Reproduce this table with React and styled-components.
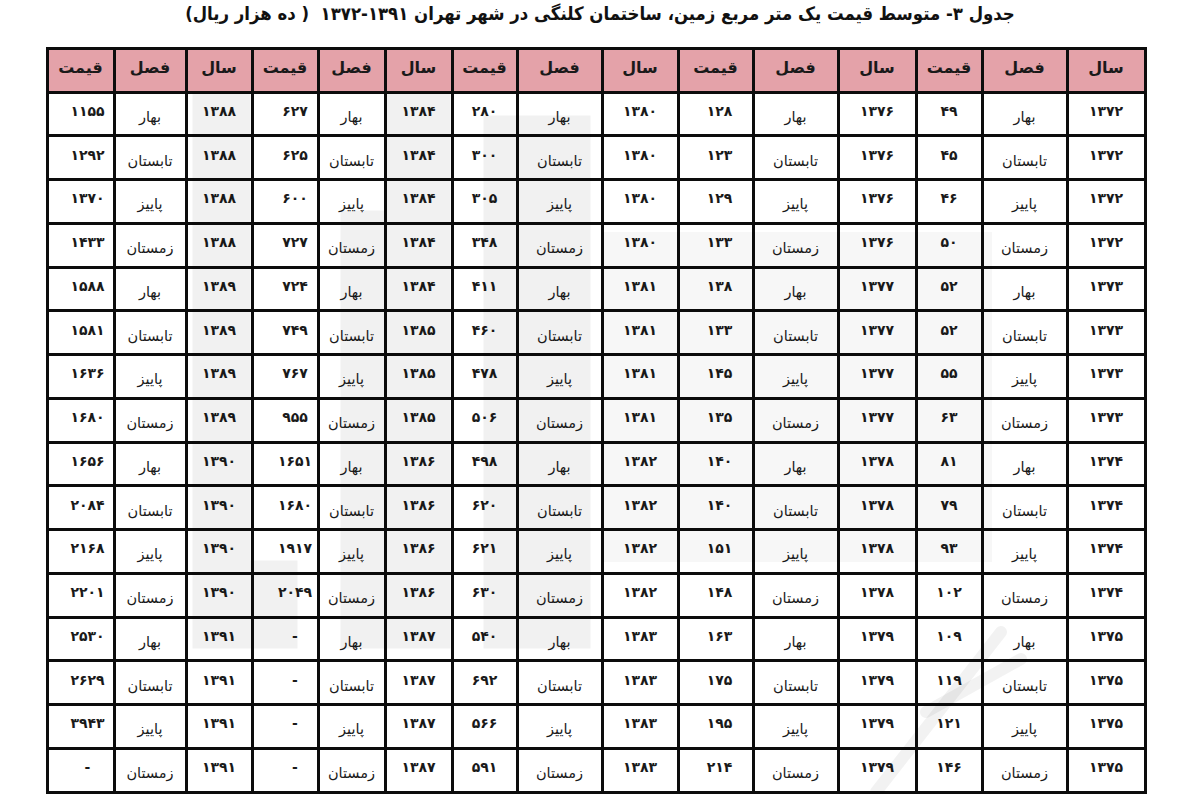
import React from "react";
import styled, { createGlobalStyle } from "styled-components";

const GlobalStyle = createGlobalStyle`
  html, body { margin: 0; padding: 0; background: #ffffff; }
  body { font-family: "DejaVu Sans", sans-serif; color: #151515; }
`;

const Page = styled.div`
  width: 1200px;
  height: 800px;
  overflow: hidden;
  display: flex;
  flex-direction: column;
  align-items: flex-start;
  background: #ffffff;
`;

const Title = styled.h1`
  margin: 0;
  width: 100%;
  height: 46.5px;
  direction: rtl;
  text-align: center;
  font-family: "DejaVu Sans Condensed", "DejaVu Sans", sans-serif;
  font-stretch: condensed;
  font-weight: bold;
  font-size: 18.4px;
  line-height: 27px;
  color: #111;
  white-space: nowrap;
`;

const TableWrap = styled.div`
  position: relative;
  margin-left: 45.5px;
`;

const Grid = styled.div`
  display: grid;
  direction: rtl;
  grid-template-columns: 75px 82px 63px 75px 82px 72px 73px 82px 62px 64px 64px 63px 63px 69px 64px;
  grid-template-rows: 41px repeat(16, 40.75px);
  gap: 3px;
  padding: 3px;
  background: #0c0c0c;
  width: max-content;
`;

const Cell = styled.div`
  background: ${(p) => (p.$head ? "#e4a2a9" : "#ffffff")};
  display: flex;
  align-items: center;
  justify-content: center;
  font-family: "DejaVu Sans", sans-serif;
  font-size: ${(p) => (p.$head ? "16px" : p.$kind === "season" ? "14.5px" : "14px")};
  font-weight: ${(p) => (p.$head || p.$kind !== "season" ? "bold" : "normal")};
  color: #1a1a1a;
  padding: ${(p) =>
    p.$head ? "0 0 6px 0" : p.$kind === "season" ? "6px 0 0 0" : "0 0 6px 0"};
  padding-left: ${(p) => (p.$nudge ? `${p.$nudge}px` : "0")};
  box-sizing: border-box;
  white-space: nowrap;
`;

const Watermark = styled.svg`
  position: absolute;
  left: 0;
  top: 0;
  width: 1101px;
  height: 747px;
  pointer-events: none;
`;

const toFa = (v) =>
  String(v).replace(/[0-9]/g, (d) => "۰۱۲۳۴۵۶۷۸۹"[Number(d)]);

const seasons = ["بهار", "تابستان", "پاییز", "زمستان"];
const heads = ["سال", "فصل", "قیمت"];

const prices = [
  [49, 45, 46, 50, 52, 52, 55, 63, 81, 79, 93, 102, 109, 119, 121, 146],
  [128, 123, 129, 133, 138, 133, 145, 135, 140, 140, 151, 148, 163, 175, 195, 214],
  [280, 300, 305, 348, 411, 460, 478, 506, 498, 620, 621, 630, 540, 692, 566, 591],
  [627, 625, 600, 727, 724, 749, 767, 955, 1651, 1680, 1917, 2049, "-", "-", "-", "-"],
  [1155, 1292, 1370, 1433, 1588, 1581, 1636, 1680, 1656, 2084, 2168, 2201, 2530, 2629, 3943, "-"],
];

const yearsG3 = [1384, 1384, 1384, 1384, 1384, 1385, 1385, 1385, 1386, 1386, 1386, 1386, 1387, 1387, 1387, 1387];

const yearOf = (g, r) => (g === 3 ? yearsG3[r] : 1372 + g * 4 + Math.floor(r / 4));

const nudges = [0, 8, 0, 20, 14];

function WatermarkLogo() {
  return (
    <Watermark viewBox="0 0 1101 747" aria-hidden="true">
      <g fill="#000" fillOpacity="0.055">
        <rect x="146.5" y="45.5" width="58" height="556" />
        <rect x="204.5" y="513.5" width="47" height="88" />
        <rect x="294.5" y="163.5" width="45" height="438" />
        <rect x="339.5" y="45.5" width="65" height="556" />
        <rect x="437.5" y="68.5" width="107" height="533" />
      </g>
      <rect x="556" y="185" width="390" height="330" fill="#000" fillOpacity="0.03" />
      <g stroke="#000" strokeOpacity="0.05" strokeWidth="12" strokeLinecap="round" fill="none">
        <path d="M 830 745 L 955 585" />
        <path d="M 880 665 L 975 612" />
      </g>
    </Watermark>
  );
}

export default function App() {
  const rows = Array.from({ length: 16 }, (_, r) => r);
  return (
    <Page>
      <GlobalStyle />
      <Title>
        جدول ۳- متوسط قیمت یک متر مربع زمین، ساختمان کلنگی در شهر تهران ۱۳۹۱-۱۳۷۲&nbsp; ( ده هزار ریال)
      </Title>
      <TableWrap>
        <Grid>
          {[0, 1, 2, 3, 4].map((g) =>
            heads.map((h, i) => (
              <Cell key={`h${g}${i}`} $head>
                {h}
              </Cell>
            ))
          )}
          {rows.map((r) =>
            [0, 1, 2, 3, 4].map((g) => [
              <Cell key={`y${r}-${g}`} $kind="year">
                {toFa(yearOf(g, r))}
              </Cell>,
              <Cell key={`s${r}-${g}`} $kind="season">
                {seasons[r % 4]}
              </Cell>,
              <Cell key={`p${r}-${g}`} $kind="price" $nudge={nudges[g]}>
                {toFa(prices[g][r])}
              </Cell>,
            ])
          )}
        </Grid>
        <WatermarkLogo />
      </TableWrap>
    </Page>
  );
}
